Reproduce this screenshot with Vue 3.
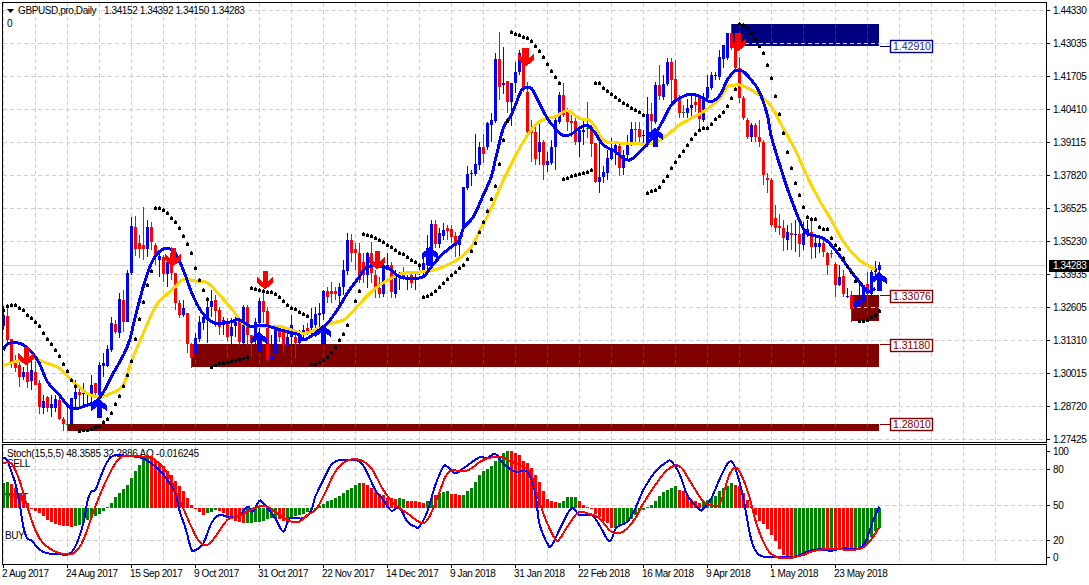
<script setup>
import { computed } from 'vue'

const priceTicks = ['1.44330', '1.43035', '1.41705', '1.40410', '1.39115', '1.37820', '1.36525', '1.35230', '1.33935', '1.32605', '1.31310', '1.30015', '1.28720', '1.27425']
const oscTicks = [
  { label: '100', gap: 18 },
  { label: '80', gap: 36 },
  { label: '50', gap: 35 },
  { label: '20', gap: 17 },
  { label: '0', gap: 13 },
]
const dates = ['2 Aug 2017', '24 Aug 2017', '15 Sep 2017', '9 Oct 2017', '31 Oct 2017', '22 Nov 2017', '14 Dec 2017', '9 Jan 2018', '31 Jan 2018', '22 Feb 2018', '16 Mar 2018', '9 Apr 2018', '1 May 2018', '23 May 2018']

const colors = { r: '#ff0000', b: '#0000ff', g: '#008000' }

// colour, wick top, body top, body bottom, wick bottom (page pixels)
const candles = [
  ['b',306,315,326,330],['r',306,316,340,342],['r',339,339,363,368],['r',355,362,368,372],['r',360,365,377,387],
  ['b',367,372,377,380],['r',363,372,382,388],['b',360,370,381,390],['r',360,372,385,385],['r',380,383,407,414],
  ['b',395,401,408,414],['r',396,397,408,412],['b',395,404,408,417],['b',395,399,408,412],['r',395,400,419,420],
  ['r',417,419,424,431],['g',407,424,425,431],['b',398,398,424,424],['b',380,392,399,408],['r',388,392,395,407],
  ['b',383,393,394,407],['b',392,393,394,407],['b',375,385,395,407],['r',383,383,393,397],['b',362,365,398,412],
  ['b',353,363,366,377],['b',345,349,366,367],['b',317,323,350,352],['r',320,324,332,334],['b',293,299,333,338],
  ['r',290,300,322,332],['b',270,273,322,322],['b',217,226,273,275],['r',216,227,249,256],['r',235,243,249,258],
  ['r',207,245,249,260],['b',220,227,249,257],['r',222,227,242,250],['r',243,245,257,265],['b',253,256,260,277],
  ['r',255,257,274,282],['b',257,262,274,287],['r',247,253,273,280],['r',273,273,303,310],['r',300,303,315,318],
  ['b',300,308,315,317],['r',313,313,344,353],['r',343,344,358,368],['b',333,338,353,358],['b',316,322,339,342],
  ['b',315,317,323,330],['b',298,307,320,343],['b',290,301,307,317],['r',295,300,311,327],['r',307,310,327,335],
  ['b',317,320,325,335],['r',318,322,337,341],['b',318,327,336,352],['b',317,322,326,337],['r',318,320,342,345],
  ['b',305,307,343,347],['r',305,307,335,345],['r',335,335,343,357],['b',318,322,340,348],['b',298,301,323,348],
  ['r',292,301,312,323],['r',307,311,360,362],['b',335,355,360,365],['b',328,330,353,362],['r',327,330,337,342],
  ['r',330,332,345,353],['b',333,337,345,353],['b',315,325,337,346],['r',335,337,343,359],['b',330,332,343,355],
  ['b',325,330,333,340],['r',323,328,332,335],['b',308,319,328,335],['b',307,314,325,335],['b',303,313,315,328],
  ['b',290,291,314,320],['r',287,291,297,303],['r',282,291,294,303],['r',287,291,294,300],['b',283,287,296,307],
  ['b',260,270,287,295],['b',233,240,271,275],['r',234,240,253,262],['r',243,249,253,270],['r',243,253,280,283],
  ['r',253,262,275,283],['b',252,253,275,288],['r',242,253,273,283],['r',270,275,288,298],['r',277,288,294,298],
  ['b',263,265,294,297],['b',253,265,270,270],['r',262,265,292,298],['b',270,275,294,298],['b',272,273,275,290],
  ['r',267,275,279,280],['b',275,277,278,290],['r',273,275,283,288],['b',272,278,279,290],['b',263,272,273,275],
  ['b',253,263,273,275],['b',235,248,265,275],['b',220,224,265,265],['r',220,224,244,248],['b',228,233,244,248],
  ['b',223,230,236,240],['r',225,228,231,240],['r',225,229,237,243],['r',232,236,246,257],['b',235,236,245,258],
  ['b',187,187,228,230],['b',166,174,188,190],['b',170,173,174,186],['b',134,164,174,176],['b',142,147,165,170],
  ['r',134,147,154,163],['b',122,123,147,150],['b',113,120,125,142],['b',53,59,121,123],['r',32,59,87,100],
  ['b',47,83,85,94],['r',81,81,102,113],['b',83,83,102,126],['b',62,72,83,93],['b',50,53,72,75],
  ['r',48,48,90,92],['r',82,92,132,134],['r',120,131,133,162],['r',125,132,159,165],['b',120,142,152,165],
  ['r',140,142,165,180],['b',152,161,165,172],['b',140,147,163,165],['b',115,120,147,170],['b',92,95,122,124],
  ['r',83,95,115,117],['r',108,112,122,131],['r',115,121,123,137],['r',117,121,142,145],['b',128,130,142,157],
  ['b',120,130,132,145],['g',102,128,129,138],['r',125,128,144,157],['r',143,143,182,183],['b',143,177,182,193],
  ['b',166,172,177,183],['b',150,158,173,180],['b',138,150,159,160],['b',142,145,152,165],['r',143,146,168,176],
  ['b',150,155,168,175],['b',135,143,155,158],['b',122,129,144,146],['g',122,129,130,143],['r',122,129,137,143],
  ['b',130,135,136,146],['b',97,114,145,147],['r',103,114,121,132],['b',82,85,122,124],['r',65,85,96,100],
  ['b',75,84,97,100],['b',58,62,84,86],['r',58,62,80,102],['r',60,79,100,102],['r',95,97,113,118],
  ['g',105,112,113,118],['b',99,108,113,118],['b',95,105,108,117],['r',97,102,105,112],['r',95,96,119,132],
  ['b',93,100,120,122],['b',75,87,98,100],['b',72,75,88,90],['b',72,75,76,80],['b',50,57,77,80],
  ['b',45,45,59,68],['b',33,33,58,60],['r',24,33,48,50],['r',33,42,68,70],['r',57,68,98,103],
  ['r',96,98,118,120],['r',118,120,137,139],['b',123,125,137,142],['r',123,125,137,142],['r',120,137,142,147],
  ['r',140,142,175,185],['r',173,178,180,193],['r',178,180,225,227],['r',205,218,228,232],['r',214,226,228,235],
  ['r',220,228,238,251],['b',225,232,240,250],['r',223,233,235,250],['b',220,234,235,252],['r',220,234,244,257],
  ['b',222,233,245,250],['b',220,229,235,237],['r',220,232,247,259],['b',237,243,247,258],['b',238,243,247,253],
  ['r',238,243,252,257],['r',252,253,265,275],['r',250,253,254,258],['r',262,264,285,297],['b',265,277,285,286],
  ['r',270,276,294,297],['b',288,296,297,298],['r',291,295,309,322],['b',300,302,308,313],['b',280,300,305,307],
  ['b',285,285,302,310],['r',272,284,294,308],['b',270,272,294,298],['b',261,268,272,278],['b',262,265,270,272],
]

const scaled = (ox, oy, pts) => pts.map(([x, y]) => [ox + x / 3, oy + y / 3])

// catmull-rom through the traced points, the terminal draws per-bar so no corners
const toLine = (pts) => {
  const out = []
  for (let i = 0; i < pts.length - 1; i++) {
    const p0 = pts[Math.max(i - 1, 0)]
    const p1 = pts[i]
    const p2 = pts[i + 1]
    const p3 = pts[Math.min(i + 2, pts.length - 1)]
    for (let s = 0; s < 4; s++) {
      const t = s / 4
      const f = (a, b, c, d) =>
        0.5 * (2 * b + (c - a) * t + (2 * a - 5 * b + 4 * c - d) * t * t + (3 * b - a - 3 * c + d) * t * t * t)
      out.push(`${f(p0[0], p1[0], p2[0], p3[0]).toFixed(1)},${f(p0[1], p1[1], p2[1], p3[1]).toFixed(1)}`)
    }
  }
  const last = pts[pts.length - 1]
  out.push(`${last[0].toFixed(1)},${last[1].toFixed(1)}`)
  return out.join(' ')
}

const blueMa = toLine([
  ...scaled(0, 220, [[10,390],[22,372],[46,368],[70,375],[94,395],[118,430],[142,485],[178,525],[214,565],[262,555],[298,535],[334,470],[382,380],[406,290],[430,200],[454,130],[478,95],[502,85],[526,100],[550,150],[574,215],[598,265],[622,295],[646,310],[670,310],[694,305],[718,300],[754,320],[790,315],[826,325],[862,335],[898,345],[910,360],[946,340],[982,310],[1018,260],[1042,220],[1078,170]]),
  ...scaled(360, 220, [[22,140],[70,140],[94,150],[118,170],[154,175],[190,170],[214,140],[250,100],[298,60]]),
  ...scaled(360, 20, [[310,625],[340,590],[370,525],[394,470],[406,420],[430,325],[454,285],[478,225],[490,205],[514,205],[538,250],[562,295],[586,325],[610,347],[634,342],[658,325],[682,315],[706,340],[730,375],[766,395],[790,415],[814,418],[850,385],[886,340],[910,300],[934,255],[958,235],[994,222],[1030,235],[1054,245],[1080,225]]),
  ...scaled(720, 0, [[22,240],[46,212],[70,215],[94,240],[118,275],[142,345],[154,410],[178,490],[202,565],[238,660]]),
  ...scaled(720, 220, [[262,40],[310,55],[346,90],[394,155],[430,200],[445,215],[466,205]]),
])

const goldMa = toLine([
  ...scaled(0, 220, [[10,437],[46,425],[94,415],[142,430],[178,445],[214,480],[262,520],[298,530],[334,520],[370,495],[394,425],[430,340],[466,260],[498,225],[526,200],[550,178],[586,183],[622,188],[658,225],[694,265],[730,310],[766,320],[826,318],[862,325],[910,340],[958,325],[994,310],[1030,300],[1054,280],[1080,250]]),
  ...scaled(360, 220, [[46,205],[94,175],[130,160],[190,155],[238,145],[298,115],[334,80],[360,30]]),
  ...scaled(360, 20, [[394,565],[430,480],[490,365],[538,305],[586,290],[622,272],[658,295],[694,305],[730,360],[766,368],[814,370],[850,372],[886,368],[922,345],[958,315],[994,295],[1030,275],[1080,235]]),
  ...scaled(720, 0, [[22,260],[46,255],[70,258],[118,285],[154,320],[190,385],[226,450],[262,530],[298,600],[334,660]]),
  ...scaled(720, 220, [[370,65],[418,120],[466,148]]),
])

const sarPoints = [
  ...scaled(0, 0, [[2,945],[10,930],[22,918],[34,915],[46,915]]),
  ...scaled(0, 220, [[58,263],[70,270],[82,285],[94,293],[106,305],[118,318],[130,340],[142,357],[154,372],[166,390],[178,408],[190,432],[202,452],[214,480],[226,497],[238,632],[250,630],[262,630],[274,627],[286,622],[298,618],[310,607],[322,597],[334,578],[346,552],[358,528],[370,498],[382,465],[394,423],[406,356],[418,297],[430,246],[442,195],[454,153]]),
  ...scaled(0, 0, [[466,623],[478,625],[490,630],[502,640],[514,655]]),
  ...scaled(0, 220, [[526,7],[538,25],[550,48],[562,72],[574,100],[586,145],[598,180],[610,210],[622,237],[634,440],[646,435],[658,430],[670,428],[682,426],[694,424],[706,420],[718,417],[730,413],[742,410],[754,203],[766,207],[778,210],[790,212],[802,217],[814,215],[826,222],[838,232],[850,243],[862,255],[874,263],[886,268],[898,275],[910,282],[922,287],[934,432],[946,431],[958,425],[970,420],[982,410],[994,396],[1006,381],[1018,361],[1030,343],[1042,315],[1066,243],[1078,212]]),
  ...scaled(360, 220, [[10,42],[22,45],[34,48],[46,55],[58,60],[70,67],[82,75],[94,80],[106,90],[118,98],[130,103],[142,112],[154,120],[166,127],[178,135],[190,232],[202,228],[214,222],[226,213],[238,202],[250,190],[262,177],[274,165],[286,157],[298,145],[310,135],[322,116],[334,93],[346,70],[358,37]]),
  ...scaled(360, 20, [[370,605],[382,573],[394,537],[406,497],[418,432],[430,360],[442,303],[454,37],[466,42],[478,45],[490,50],[502,55],[514,63],[526,77],[538,93],[550,110],[562,132],[574,153],[586,172],[598,188],[610,477],[622,474],[634,468],[646,465],[658,462],[670,458],[682,455],[694,450],[706,188],[718,190],[730,203],[742,212],[754,222],[766,232],[778,240],[790,248],[802,255],[814,263],[826,270],[838,277],[850,285],[862,520],[874,513],[886,510],[898,502],[910,483],[922,467],[934,445],[946,427],[958,408],[970,392],[982,376],[994,357],[1006,343],[1018,330],[1030,325],[1042,323],[1054,312],[1066,298],[1078,288]]),
  ...scaled(720, 0, [[10,335],[22,318],[34,293],[46,267],[58,72],[70,75],[82,85],[94,100],[106,117],[118,138],[130,158],[142,195],[154,234],[166,288],[178,342],[190,400],[202,456],[214,504],[226,548],[238,585],[250,620],[262,652],[274,656],[286,656]]),
  ...scaled(720, 220, [[298,22],[310,27],[322,27],[334,55],[346,75],[358,87],[370,115],[382,137],[394,157],[406,182],[418,303],[430,303],[442,300],[454,292],[466,286],[478,274]]),
]

// each dot is a 3px square with a 1px nub on top
const sarPath = computed(() =>
  sarPoints.map(([x, y]) => {
    const px = Math.floor(x)
    const py = Math.round(y)
    return `M${px - 1} ${py - 1}h3v3h-3zM${px} ${py - 2}h1v1h-1z`
  }).join('')
)

const downArrows = [[26, 347], [173, 248], [265, 271], [377, 251], [526, 48], [738, 33]]
const upArrows = [[99, 399], [259, 332], [323, 325], [430, 247], [655, 128], [879, 272]]
const upShape = 'M0 0L8 6.5L8 12.5L2.5 8L2.5 18.5L-2.5 18.5L-2.5 8L-8 12.5L-8 6.5Z'
const downShape = 'M-2.5 0L2.5 0L2.5 11L8 6L8 12L0 18.5L-8 12L-8 6L-2.5 11Z'

const zones = [
  { x: 731, y: 24, w: 148, h: 22, fill: '#000080' },
  { x: 851, y: 295, w: 28, h: 26, fill: '#800000' },
  { x: 192, y: 344, w: 687, h: 23, fill: '#800000' },
  { x: 67, y: 424, w: 812, h: 7, fill: '#800000' },
]
const levels = [
  { text: '1.42910', y: 46, top: 40, color: '#000080', ink: '#1c1ca8' },
  { text: '1.33076', y: 295, top: 290, color: '#800000', ink: '#800000' },
  { text: '1.31180', y: 344, top: 339, color: '#800000', ink: '#800000' },
  { text: '1.28010', y: 424, top: 418, color: '#800000', ink: '#800000' },
]

const gridX = Array.from({ length: 32 }, (_, i) => 3.5 + 32 * i)
const gridY = Array.from({ length: 14 }, (_, i) => 10.5 + 33 * i)
const oscGridY = [469.5, 505.5, 540.5]

// awesome oscillator, traced at 3x from the zero line
const aoRuns = [
  ['g', [76,78]],
  ['r', [72,60,44,39,16,-2,-10,-15,-25,-35,-42,-47,-50,-53,-55,-57]],
  ['g', [-54,-52,-45,-35,-30,-24,-18,-8,3,14,32,46,58,70,90,112,130,150,158]],
  ['r', [155,145,135,125,112,100,82,65,50,30,10,-4,-12,-20]],
  ['g', [-15,-12,-5]],
  ['r', [-8,-15,-25,-30,-38,-42,-45]],
  ['g', [-45,-45,-43,-43,-38,-33,-30,-30]],
  ['r', [-33,-38]],
  ['g', [-42,-30,-25,-22,-18,-12,-6,-2,5,12,20,25,30,35,45,55,60,70,75]],
  ['r', [75,70,60,48,42,38,30,30,28]],
  ['g', [30,28]],
  ['r', [22,20,20,18,15]],
  ['g', [20,30]],
  ['r', [38]],
  ['g', [45,48,50]],
  ['r', [43,41,38]],
  ['g', [38,50,60,78,100,112,118,125,140,155,165,170]],
  ['r', [170,165,160,140,135,120,100,78,50,28,22,18]],
  ['g', [15,20,32,32,32]],
  ['r', [20,8,4,-3,-18,-28,-38,-45,-60]],
  ['g', [-60,-55,-45,-40,-32,-20,-10,-5,3,10,20,35,48,55,60,65]],
  ['r', [55,50,35,25,20,15]],
  ['g', [18,25,30,35,50,60,65,75]],
  ['r', [70,65,45,25,5,-20,-38,-48,-62,-80,-100,-122,-140,-150,-152]],
  ['g', [-150,-148,-143,-138,-132,-128,-125,-125]],
  ['r', [-120]],
  ['g', [-125]],
  ['r', [-125,-125,-125,-125,-125]],
  ['g', [-125,-122,-118,-108,-88,-70,-60]],
]
const aoBars = aoRuns.flatMap(([c, vals]) => vals.map((v) => ({ c, v }))).map(({ c, v }, i) => ({
  x: 2 + 4 * i,
  y: v > 0 ? 508 - v / 3 : 508,
  h: Math.max(1, Math.abs(v) / 3),
  fill: colors[c],
}))

const stochFast = toLine([
  ...scaled(0, 440, [[10,55],[22,60],[34,95],[46,130],[58,185],[70,260],[82,295],[94,300],[106,315],[118,328],[142,340],[178,342],[202,345],[226,320],[250,250],[262,185],[274,155],[286,150],[298,120],[322,65],[346,45],[382,48],[418,52],[442,62],[478,90],[502,120],[526,160],[538,210],[558,270],[574,328],[586,330],[610,310],[634,250],[658,225],[682,230],[714,230],[742,200],[758,215],[778,183],[790,190],[826,235],[850,275],[870,235],[910,235],[934,210],[946,170],[970,120],[994,75],[1018,60],[1042,60],[1080,65]]),
  ...scaled(360, 440, [[22,100],[46,150],[70,180],[94,212],[118,203],[142,245],[166,260],[178,260],[202,215],[226,135],[250,80],[262,80],[286,100],[310,85],[358,52],[380,55],[406,42],[430,70],[466,95],[502,95],[526,160],[538,250],[562,310],[574,318],[598,270],[634,205],[658,225],[694,225],[718,255],[742,298],[754,298],[770,262],[802,245],[826,205],[850,150],[886,95],[922,65],[934,65],[958,100],[982,165],[1018,208],[1030,207],[1054,175],[1080,115]]),
  ...scaled(720, 440, [[28,65],[46,85],[70,175],[94,300],[118,345],[154,350],[190,352],[226,350],[262,335],[298,328],[334,332],[370,325],[406,328],[434,310],[460,240],[478,200]]),
])

const stochSlow = toLine([
  ...scaled(0, 440, [[10,70],[34,70],[58,120],[82,200],[106,270],[130,310],[166,335],[202,343],[226,335],[250,300],[286,200],[322,115],[358,55],[394,48],[430,50],[466,60],[502,100],[526,150],[550,205],[574,260],[598,305],[622,315],[646,290],[682,240],[718,228],[766,203],[802,200],[838,225],[874,245],[898,245],[922,225],[946,210],[970,170],[1006,95],[1042,62],[1080,60]]),
  ...scaled(360, 440, [[34,85],[70,150],[106,195],[142,220],[182,248],[202,240],[226,190],[262,100],[298,92],[326,90],[370,60],[418,50],[454,65],[490,80],[514,105],[538,185],[562,250],[586,298],[598,298],[622,260],[654,218],[682,220],[718,235],[754,275],[790,275],[826,235],[850,190],[886,135],[922,90],[958,78],[994,130],[1030,185],[1054,195],[1080,190]]),
  ...scaled(720, 440, [[28,105],[52,85],[82,150],[106,240],[130,305],[154,342],[190,355],[238,348],[274,335],[310,328],[358,328],[394,330],[430,322],[454,298],[478,262]]),
])
</script>

<template>
  <div class="terminal">
    <div class="pane main-pane">
      <svg class="plot" width="1043" height="439" viewBox="3 3 1043 439">
        <line class="price-line" x1="3" x2="1046" y1="265.5" y2="265.5" />
        <line v-for="x in gridX" :key="x" class="grid" :x1="x" :x2="x" y1="3" y2="442" />
        <rect v-for="z in zones" :key="z.x" :x="z.x" :y="z.y" :width="z.w" :height="z.h" :fill="z.fill" />
        <line v-for="x in gridX" :key="x" class="grid grid-dim" :x1="x" :x2="x" y1="3" y2="442" />
        <line v-for="y in gridY" :key="y" class="grid" x1="3" x2="1046" :y1="y" :y2="y" />

        <g v-for="(c, i) in candles" :key="i" :fill="colors[c[0]]" shape-rendering="crispEdges">
          <rect :x="3 + 4 * i" :y="c[1]" width="1" :height="c[4] - c[1]" />
          <rect :x="2 + 4 * i" :y="c[2]" width="3" :height="c[3] - c[2]" />
        </g>

        <polyline class="ma" stroke="#ffd700" :points="goldMa" />
        <polyline class="ma" stroke="#0000ff" :points="blueMa" />
        <path :d="sarPath" fill="#000" shape-rendering="crispEdges" />

        <path v-for="a in downArrows" :key="a[0]" :d="downShape" :transform="`translate(${a[0]} ${a[1]})`" fill="#ff0000" shape-rendering="crispEdges" />
        <path v-for="a in upArrows" :key="a[0]" :d="upShape" :transform="`translate(${a[0]} ${a[1]})`" fill="#0000ff" shape-rendering="crispEdges" />

        <g v-for="l in levels" :key="l.text">
          <line :x1="880" :x2="890" :y1="l.y + 0.5" :y2="l.y + 0.5" :stroke="l.color" />
          <rect class="level-box" :x="890.5" :y="l.top + 0.5" width="42" height="12" :stroke="l.color" />
          <text class="level-text" x="893" :y="l.top + 10" :fill="l.ink">{{ l.text }}</text>
        </g>

        <path d="M7 9h7l-3.5 4z" fill="#000" />
        <text class="chart-text" x="18" y="14">GBPUSD,pro,Daily</text>
        <text class="chart-text" x="104" y="14">1.34152 1.34392 1.34150 1.34283</text>
        <text class="chart-text" x="7" y="27">0</text>
      </svg>
    </div>
    <div class="price-axis">
      <div v-for="p in priceTicks" :key="p" class="axis-row">
        <span class="tick"></span>
        <span>{{ p }}</span>
      </div>
      <div class="last-price">1.34283</div>
    </div>

    <div class="pane osc-pane">
      <svg class="plot" width="1043" height="119" viewBox="3 445 1043 119">
        <line v-for="x in gridX" :key="x" class="grid" :x1="x" :x2="x" y1="445" y2="564" />
        <line v-for="y in oscGridY" :key="y" class="grid" x1="3" x2="1046" :y1="y" :y2="y" />
        <text class="chart-text osc-title" x="7" y="457">Stoch(15,5,5) 48.3585 32.2886  AO -0.016245</text>
        <text class="chart-text" x="7" y="467">SELL</text>
        <text class="chart-text" x="5" y="501">WAIT</text>
        <text class="chart-text" x="5" y="539">BUY</text>
        <rect v-for="(b, i) in aoBars" :key="i" :x="b.x" :y="b.y" width="3" :height="b.h" :fill="b.fill" shape-rendering="crispEdges" />
        <polyline class="stoch" stroke="#0000ff" :points="stochFast" />
        <polyline class="stoch" stroke="#ff0000" :points="stochSlow" />
      </svg>
    </div>
    <div class="osc-axis">
      <div v-for="t in oscTicks" :key="t.label" class="osc-row" :style="{ height: `${t.gap}px` }">
        <span class="tick"></span>
        <span>{{ t.label }}</span>
      </div>
    </div>

    <div class="time-axis">
      <div v-for="d in dates" :key="d" class="time-cell">
        <span class="time-tick"></span>
        <span class="time-label">{{ d }}</span>
      </div>
    </div>
  </div>
</template>

<style scoped>
.terminal {
  display: grid;
  grid-template-columns: 1047px 42px;
  grid-template-rows: 443px 122px 20px;
  width: 1089px;
  height: 585px;
  background: #fff;
  overflow: hidden;
  font-family: "Liberation Sans", Arial, sans-serif;
  font-size: 10px;
  letter-spacing: -0.4px;
  color: #000;
}

.pane {
  border: 1px solid #000;
  overflow: hidden;
}

.main-pane {
  margin: 2px 0 0 2px;
  height: 441px;
  box-sizing: border-box;
}

.osc-pane {
  margin: 1px 0 0 2px;
  height: 121px;
  box-sizing: border-box;
}

.plot {
  display: block;
}

.grid {
  stroke: #cfcfcf;
  stroke-dasharray: 4 3;
  shape-rendering: crispEdges;
}

.grid-dim {
  stroke-opacity: 0.22;
}

.price-line {
  stroke: #d0d0d0;
  shape-rendering: crispEdges;
}

.ma {
  fill: none;
  stroke-width: 3;
  shape-rendering: crispEdges;
}

.stoch {
  fill: none;
  stroke-width: 2;
  shape-rendering: crispEdges;
}

.chart-text {
  font-size: 10px;
  letter-spacing: -0.4px;
  fill: #000;
}

.osc-title {
  letter-spacing: -0.25px;
}

.level-box {
  fill: #fff;
  stroke-width: 1.4;
}

.level-text {
  font-size: 10.5px;
  letter-spacing: 0;
}

.price-axis {
  position: relative;
  padding-top: 4px;
}

.axis-row {
  display: flex;
  height: 33px;
  line-height: 13px;
}

.axis-row:last-of-type {
  height: 13px;
}

.tick {
  width: 3px;
  height: 1px;
  margin: 6px 3px 0 0;
  background: #000;
}

.last-price {
  position: absolute;
  top: 260px;
  left: 2px;
  width: 40px;
  height: 12px;
  line-height: 12px;
  padding-left: 4px;
  box-sizing: border-box;
  background: #000;
  color: #fff;
}

.osc-axis {
  padding-top: 2px;
}

.osc-row {
  display: flex;
  line-height: 13px;
}

.time-axis {
  grid-column: 1 / -1;
  display: flex;
  padding-left: 2px;
}

.time-cell {
  display: flex;
  flex-direction: column;
  width: 64px;
  flex: none;
}

.time-tick {
  width: 1px;
  height: 3px;
  margin-left: 1px;
  background: #000;
}

.time-label {
  line-height: 12px;
  white-space: nowrap;
}
</style>

<style>
html,
body {
  background: #fff;
}
</style>
